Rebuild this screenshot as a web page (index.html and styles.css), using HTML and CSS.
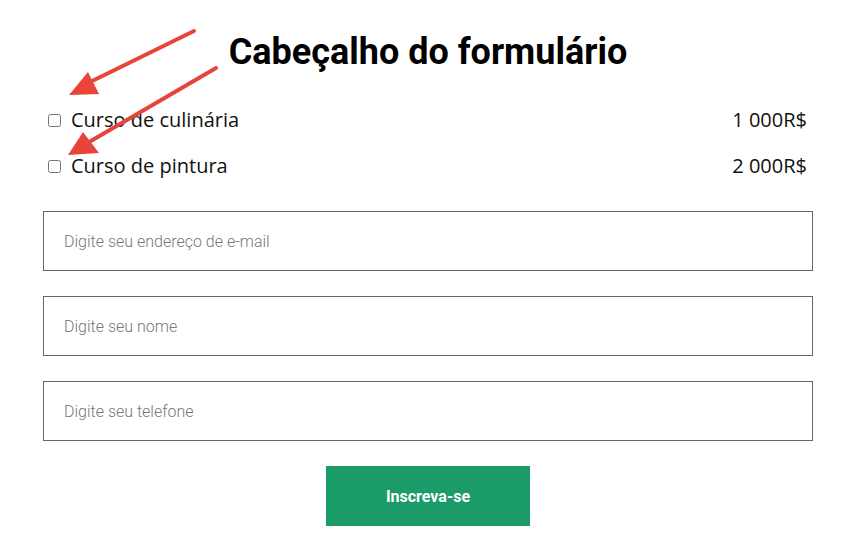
FILE: index.html
```html
<!DOCTYPE html>
<html lang="pt-BR">
<head>
  <meta charset="UTF-8" />
  <meta name="viewport" content="width=device-width, initial-scale=1.0" />
  <title>Formulário</title>
  <link rel="stylesheet" href="styles.css">
</head>
<body>
  <div class="page">
    <h1 class="title">Cabeçalho do formulário</h1>

    <form class="signup">
      <div class="courses">
        <label class="course">
          <input type="checkbox" name="culinaria" />
          <span class="course-name">Curso de culinária</span>
          <span class="price">1 000R$</span>
        </label>
        <label class="course">
          <input type="checkbox" name="pintura" />
          <span class="course-name">Curso de pintura</span>
          <span class="price">2 000R$</span>
        </label>
      </div>

      <input class="field" type="email" placeholder="Digite seu endereço de e-mail" />
      <input class="field" type="text" placeholder="Digite seu nome" />
      <input class="field" type="tel" placeholder="Digite seu telefone" />

      <button class="submit" type="submit">Inscreva-se</button>
    </form>

    <!-- annotation arrows pointing at the checkboxes -->
    <svg class="arrows" width="844" height="200" viewBox="0 0 844 200">
      <g stroke="#e8443a" stroke-width="4" stroke-linecap="round" fill="#e8443a">
        <line x1="194" y1="31" x2="84" y2="85" />
        <polygon points="69,95 88,72 99,94" stroke="none" />
        <line x1="216" y1="68" x2="84" y2="145" />
        <polygon points="68,155 83,132 99,153" stroke="none" />
      </g>
    </svg>
  </div>
</body>
</html>
```

FILE: styles.css
```css
body {
  margin: 0;
  background-color: #fff;
  font-family: Roboto, "Liberation Sans", sans-serif;
  color: #000;
}
.page {
  position: relative;
  padding: 0 31px 0 43px;
}
.title {
  margin: 0;
  padding-top: 31px;
  text-align: center;
  font-size: 36px;
  font-weight: 700;
  line-height: 42px;
}
.signup {
  display: flex;
  flex-direction: column;
  gap: 25px;
}
.courses {
  display: flex;
  flex-direction: column;
  gap: 20px;
  padding: 34px 6px 7px 5px;
}
.course {
  display: flex;
  align-items: center;
  gap: 10px;
  font-family: "Open Sans", sans-serif;
  font-size: 20px;
  line-height: 26px;
  color: #111;
}
.course input {
  margin: 0;
  width: 13px;
  height: 13px;
}
.course-name {
  flex: 1;
}
.field {
  box-sizing: border-box;
  height: 60px;
  margin: 0;
  padding: 0 20px;
  border: 1px solid #666;
  border-radius: 0;
  font-family: Roboto, sans-serif;
  font-size: 16px;
  font-weight: 300;
}
.field::placeholder {
  color: #777;
}
.submit {
  align-self: center;
  width: 204px;
  height: 60px;
  border: none;
  border-radius: 0;
  background-color: #1b9b68;
  color: #fff;
  font-family: Roboto, sans-serif;
  font-size: 16px;
  font-weight: 700;
  cursor: pointer;
}
.arrows {
  position: absolute;
  top: 0;
  left: 0;
  pointer-events: none;
}
```
